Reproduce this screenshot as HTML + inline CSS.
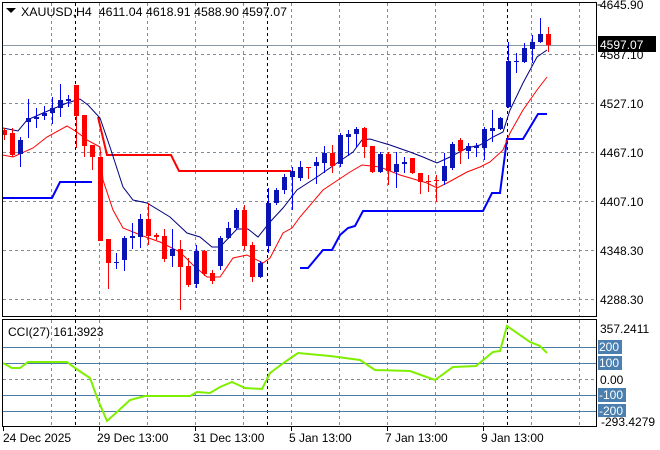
<!DOCTYPE html>
<html><head><meta charset="utf-8"><style>
html,body{margin:0;padding:0;background:#fff;}
svg{display:block;font-family:"Liberation Sans",sans-serif;}
</style></head><body>
<svg id="s" width="660" height="450" xmlns="http://www.w3.org/2000/svg">
<rect width="660" height="450" fill="#fff"/>
<g id="grid" stroke="#7f8b96" stroke-dasharray="3,3" stroke-width="1"></g>
<g stroke="#000" stroke-dasharray="3,3" stroke-width="1">
<line x1="75.5" y1="3" x2="75.5" y2="316"/><line x1="267.5" y1="3" x2="267.5" y2="316"/><line x1="507.5" y1="3" x2="507.5" y2="316"/>
<line x1="75.5" y1="320" x2="75.5" y2="426"/><line x1="267.5" y1="320" x2="267.5" y2="426"/><line x1="507.5" y1="320" x2="507.5" y2="426"/>
</g>
<line x1="3" y1="45.5" x2="596" y2="45.5" stroke="#8a96a0"/>
<g stroke="#4a7aa8" stroke-width="1">
<line x1="3" y1="347.5" x2="596" y2="347.5"/><line x1="3" y1="363.5" x2="596" y2="363.5"/>
<line x1="3" y1="395.5" x2="596" y2="395.5"/><line x1="3" y1="411.5" x2="596" y2="411.5"/>
</g>
<polyline fill="none" stroke="#ff0000" stroke-width="2" points="98,117 107,155 171,155 179,171 291,171"/>
<polyline fill="none" stroke="#0000ff" stroke-width="2" points="3,198 52,198 60,182 92,182"/>
<polyline fill="none" stroke="#0000ff" stroke-width="2" points="300,268 308,268 323,250 332,250 340,235 348,228 355,226 363,211 483,211 492,193 500,193 507,139 523,139 538,114 547,114"/>
<polyline fill="none" stroke="#ff0000" stroke-width="1" points="3,155 13,157 33,148 47,137 67,126 77,132 87,140 100,147 103,180 113,210 123,228 143,236 160,242 180,252 193,265 207,277 220,277 233,258 247,255 263,263 270,258 283,233 292,228 300,217 323,190 350,172 362,165 380,167 400,175 427,183 437,188 447,183 467,172 480,167 490,162 503,150 510,133 523,110 537,90 547,77"/>
<polyline fill="none" stroke="#000080" stroke-width="1" points="3,128 18,131 27,120 43,113 67,103 80,99 88,105 100,118 110,147 123,187 133,200 147,203 170,217 187,233 200,237 212,247 220,247 237,229 248,229 258,237 270,222 283,208 297,190 317,177 337,163 353,152 362,140 370,139 390,145 410,152 423,157 437,163 450,157 467,148 480,145 493,137 503,132 510,110 523,83 537,57 547,50"/>
<g id="candles"></g>
<polyline fill="none" stroke="#7fef00" stroke-width="2" points="3,363 12,368 20,368 28,362 67,362 75,368 90,378 98,400 107,421 117,412 130,400 145,396 190,396 197,392 210,393 220,387 232,382 245,388 262,389 270,373 285,362 298,353 330,356 360,360 375,370 410,371 435,380 453,367 476,366 493,352 500,351 507,326 530,342 540,346 547,353"/>
<g fill="none" stroke="#000" stroke-width="1">
<rect x="2.5" y="2.5" width="594" height="314"/>
<rect x="2.5" y="319.5" width="594" height="107"/>
</g>
<g font-size="12" fill="#000">
<text x="21" y="16" textLength="266" lengthAdjust="spacingAndGlyphs" xml:space="preserve">XAUUSD,H4  4611.04 4618.91 4588.90 4597.07</text>
<text x="8" y="336">CCI(27) 161.3923</text>
<text x="600" y="9">4645.90</text><text x="600" y="59">4587.10</text><text x="600" y="108">4527.10</text>
<text x="600" y="157">4467.10</text><text x="600" y="206">4407.10</text><text x="600" y="255">4348.30</text>
<text x="600" y="304">4288.30</text>
<text x="600" y="333">357.2411</text><text x="600" y="384">0.00</text>
<text x="601" y="426">-293.4279</text>
</g>
<polygon points="6,8 16,8 11,13" fill="#000"/>
<rect x="598" y="36" width="58" height="16" fill="#000"/>
<text x="600" y="49" font-size="12" fill="#fff">4597.07</text>
<g fill="#4a7fb0"><rect x="598" y="340" width="24" height="14"/><rect x="598" y="356" width="24" height="14"/><rect x="598" y="388" width="28" height="14"/><rect x="598" y="404" width="28" height="13"/></g>
<g font-size="12" fill="#fff"><text x="599" y="351">200</text><text x="599" y="367">100</text><text x="599" y="399">-100</text><text x="599" y="415">-200</text></g>
<g stroke="#000"><line x1="3.5" y1="427" x2="3.5" y2="431"/><line x1="99.5" y1="427" x2="99.5" y2="431"/><line x1="195.5" y1="427" x2="195.5" y2="431"/><line x1="291.5" y1="427" x2="291.5" y2="431"/><line x1="387.5" y1="427" x2="387.5" y2="431"/><line x1="483.5" y1="427" x2="483.5" y2="431"/>
<line x1="597.5" y1="5" x2="601" y2="5"/></g>
<g font-size="12" fill="#000">
<text x="3" y="442">24 Dec 2025</text><text x="97" y="442">29 Dec 13:00</text><text x="193" y="442">31 Dec 13:00</text>
<text x="289" y="442">5 Jan 13:00</text><text x="385" y="442">7 Jan 13:00</text><text x="481" y="442">9 Jan 13:00</text>
</g>
</svg>
<script>
var ns="http://www.w3.org/2000/svg";
var g=document.getElementById("grid");
function L(p,x1,y1,x2,y2){var l=document.createElementNS(ns,"line");l.setAttribute("x1",x1);l.setAttribute("y1",y1);l.setAttribute("x2",x2);l.setAttribute("y2",y2);p.appendChild(l);}
for(var x=51;x<596;x+=48){L(g,x+.5,3,x+.5,316);L(g,x+.5,320,x+.5,426);}
[54,103,152,201,250,299].forEach(function(y){L(g,3,y+.5,596,y+.5);});
L(g,3,379.5,596,379.5);
var C=[[130,135,128,140],[133,155,128,157],[154,140,137,167],[122,118,99,138],[119,117,108,128],[116,113,106,120],[113,108,97,124],[108,100,84,117],[101,99,95,107],[85,116,85,148],[115,146,115,157],[145,157,145,170],[157,241,157,241],[239,263,239,289],[263,262,253,269],[260,238,236,271],[238,236,223,249],[237,219,214,248],[219,236,203,245],[235,237,233,240],[236,259,229,262],[256,249,229,267],[249,267,240,310],[266,285,258,287],[284,251,245,288],[251,274,250,276],[273,281,270,284],[266,238,236,270],[238,228,222,239],[228,210,208,230],[210,246,205,250],[245,277,242,282],[277,263,261,278],[246,203,188,253],[203,190,188,205],[190,177,174,194],[177,171,167,210],[178,167,161,181],[167,167,167,179],[166,162,157,184],[163,153,146,173],[153,166,145,173],[164,135,133,167],[137,134,130,156],[134,129,127,147],[128,147,127,158],[146,172,146,173],[172,154,152,173],[154,171,152,185],[172,164,152,188],[164,162,157,173],[158,173,158,174],[173,182,173,194],[181,181,175,192],[180,180,175,202],[181,166,153,185],[168,144,142,170],[140,151,138,164],[151,146,143,159],[148,146,143,157],[148,129,127,160],[131,128,110,142],[129,118,117,130],[107,61,42,108],[62,61,53,73],[62,48,43,63],[49,42,35,63],[42,34,18,43],[34,45,27,52]];
var cg=document.getElementById("candles");
C.forEach(function(c,i){var x=4+i*8;var up=c[1]<c[0];var col=up?"#0a14b4":"#ff0000";
var w=document.createElementNS(ns,"line");w.setAttribute("x1",x+.5);w.setAttribute("x2",x+.5);w.setAttribute("y1",c[2]);w.setAttribute("y2",c[3]);w.setAttribute("stroke",up?"#0000ff":"#ff0000");cg.appendChild(w);
var t=Math.min(c[0],c[1]),h=Math.max(1,Math.abs(c[0]-c[1]));
var r=document.createElementNS(ns,"rect");r.setAttribute("x",x-2);r.setAttribute("y",t);r.setAttribute("width",5);r.setAttribute("height",h);r.setAttribute("fill",col);cg.appendChild(r);});
</script>
</body></html>
